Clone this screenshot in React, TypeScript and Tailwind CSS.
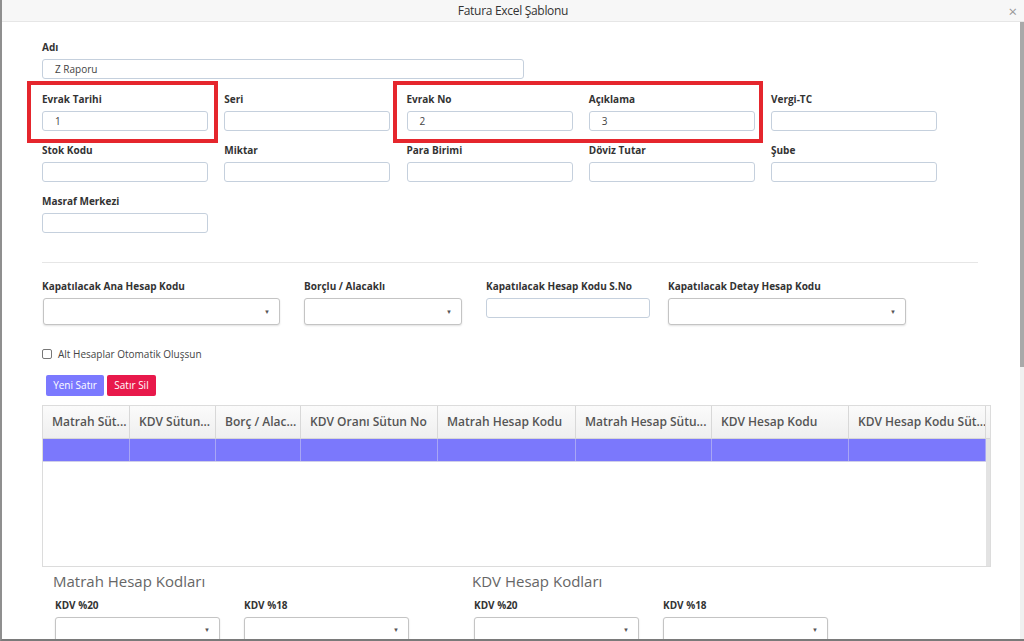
import React from "react";

const font = { fontFamily: '"Open Sans", "Noto Sans", sans-serif' };

function Label({ children }: { children: React.ReactNode }) {
  return (
    <div className="h-[12px] text-[10px] leading-[12px] font-bold text-[#333] mb-[6px] whitespace-nowrap">
      {children}
    </div>
  );
}

function Input({ value, w }: { value?: string; w: string }) {
  return (
    <div
      className={`${w} h-[20px] border border-[#c5d0dd] rounded-[3px] text-[10px] leading-[18px] pl-[12px] text-[#444] bg-white`}
    >
      {value}
    </div>
  );
}

function Select({ w, h = "h-[27px]" }: { w: string; h?: string }) {
  return (
    <div
      className={`${w} ${h} border border-[#c4c4c4] rounded-[3px] shadow-[0_1px_2px_rgba(0,0,0,0.12)] bg-white flex items-center justify-end pr-[9px]`}
    >
      <span className="text-[6px] text-[#555] leading-none">▼</span>
    </div>
  );
}

function Field({ label, value }: { label: string; value?: string }) {
  return (
    <div className="flex flex-col">
      <Label>{label}</Label>
      <Input value={value} w="w-[166px]" />
    </div>
  );
}

const cols: [string, number][] = [
  ["Matrah Süt...", 87],
  ["KDV Sütun...", 86],
  ["Borç / Alac...", 85],
  ["KDV Oranı Sütun No", 137],
  ["Matrah Hesap Kodu", 138],
  ["Matrah Hesap Sütu...", 136],
  ["KDV Hesap Kodu", 137],
  ["KDV Hesap Kodu Süt...", 137],
];

export default function App() {
  return (
    <div
      style={font}
      className="w-[1024px] h-[641px] overflow-hidden bg-white flex flex-col border-l-2 border-[#8f8f8f] border-b-2 border-b-[#7a7a7a] relative"
    >
      {/* title bar */}
      <div className="h-[22px] shrink-0 bg-[#f7f7f7] border-b border-[#e6e6e6] flex items-center relative">
        <div className="flex-1 text-center text-[12px] text-[#333] tracking-[-0.3px]">Fatura Excel Şablonu</div>
        <div className="absolute right-[7px] top-[4px] text-[15px] leading-[15px] text-[#999]">×</div>
      </div>

      <div className="flex flex-1 min-h-0">
        <div className="flex-1 min-w-0 pl-[40px] pt-[19px] relative">
          {/* Adı */}
          <div className="flex flex-col">
            <Label>Adı</Label>
            <Input value="Z Raporu" w="w-[482px]" />
          </div>

          <div className="grid grid-cols-[166px_166px_166px_166px_166px] gap-x-[16.25px] gap-y-[13px] mt-[14px]">
            <Field label="Evrak Tarihi" value="1" />
            <Field label="Seri" />
            <Field label="Evrak No" value="2" />
            <Field label="Açıklama" value="3" />
            <Field label="Vergi-TC" />
            <Field label="Stok Kodu" />
            <Field label="Miktar" />
            <Field label="Para Birimi" />
            <Field label="Döviz Tutar" />
            <Field label="Şube" />
            <Field label="Masraf Merkezi" />
          </div>

          <div className="w-[936px] h-px bg-[#e6e6e6] mt-[29px]" />

          <div className="flex mt-[17px] items-start">
            <div className="flex flex-col">
              <Label>Kapatılacak Ana Hesap Kodu</Label>
              <div className="ml-[1px]">
                <Select w="w-[237px]" />
              </div>
            </div>
            <div className="flex flex-col ml-[24px]">
              <Label>Borçlu / Alacaklı</Label>
              <Select w="w-[158px]" />
            </div>
            <div className="flex flex-col ml-[24px]">
              <Label>Kapatılacak Hesap Kodu S.No</Label>
              <Input w="w-[164px]" />
            </div>
            <div className="flex flex-col ml-[18px]">
              <Label>Kapatılacak Detay Hesap Kodu</Label>
              <Select w="w-[238px]" />
            </div>
          </div>

          <div className="flex items-center mt-[24px] h-[10px]">
            <div className="w-[10px] h-[10px] border border-[#777] rounded-[2px] bg-white" />
            <span className="ml-[6px] text-[10px] text-[#444]">Alt Hesaplar Otomatik Oluşsun</span>
          </div>

          <div className="flex gap-[3px] mt-[16px] ml-[4px]">
            <div className="h-[21px] w-[58px] bg-[#7b79ff] rounded-[2px] text-white text-[10px] flex items-center justify-center">
              Yeni Satır
            </div>
            <div className="h-[21px] w-[49px] bg-[#e8194b] rounded-[2px] text-white text-[10px] flex items-center justify-center">
              Satır Sil
            </div>
          </div>

          {/* table */}
          <div className="mt-[9px] w-[949px] h-[162px] border border-[#dcdcdc] flex flex-col">
            <div className="flex h-[33px] shrink-0 bg-gradient-to-b from-[#fbfbfb] to-[#efefef] border-b border-[#d6d6d6]">
              {cols.map(([t, w], i) => (
                <div
                  key={i}
                  style={{ width: w }}
                  className="shrink-0 border-r border-[#d8d8d8] pl-[9px] flex items-center text-[12px] font-semibold text-[#555] whitespace-nowrap overflow-hidden"
                >
                  {t}
                </div>
              ))}
              <div className="flex-1" />
            </div>
            <div className="flex flex-1 min-h-0">
              <div className="flex-1 flex flex-col">
                <div className="flex h-[23px] bg-[#7b78fc] border-b border-[#cfcfe8]">
                  {cols.map(([, w], i) => (
                    <div key={i} style={{ width: w }} className="shrink-0 border-r border-[#a8a6f5]" />
                  ))}
                </div>
              </div>
              <div className="w-[6px] bg-[#e3e3e3]" />
            </div>
          </div>

          {/* bottom sections */}
          <div className="flex mt-[4px] ml-[11px]">
            {["Matrah Hesap Kodları", "KDV Hesap Kodları"].map((h) => (
              <div key={h} className="w-[419px] flex flex-col">
                <div className="text-[15px] leading-[20px] text-[#666]">{h}</div>
                <div className="flex mt-[8px] ml-[2px]">
                  <div className="flex flex-col w-[189px]">
                    <Label>KDV %20</Label>
                    <Select w="w-[165px]" h="h-[26px]" />
                  </div>
                  <div className="flex flex-col">
                    <Label>KDV %18</Label>
                    <Select w="w-[165px]" h="h-[26px]" />
                  </div>
                </div>
              </div>
            ))}
          </div>

          {/* red annotation boxes */}
          <div className="absolute left-[25px] top-[59px] w-[191px] h-[62px] border-[4px] border-[#e5262d]" />
          <div className="absolute left-[391px] top-[59px] w-[370px] h-[62px] border-[4px] border-[#e5262d]" />
        </div>

        {/* page scrollbar */}
        <div className="w-[4px] shrink-0 bg-[#f0f0f0] flex flex-col">
          <div className="h-[345px] bg-[#a9a9a9]" />
        </div>
      </div>
    </div>
  );
}
